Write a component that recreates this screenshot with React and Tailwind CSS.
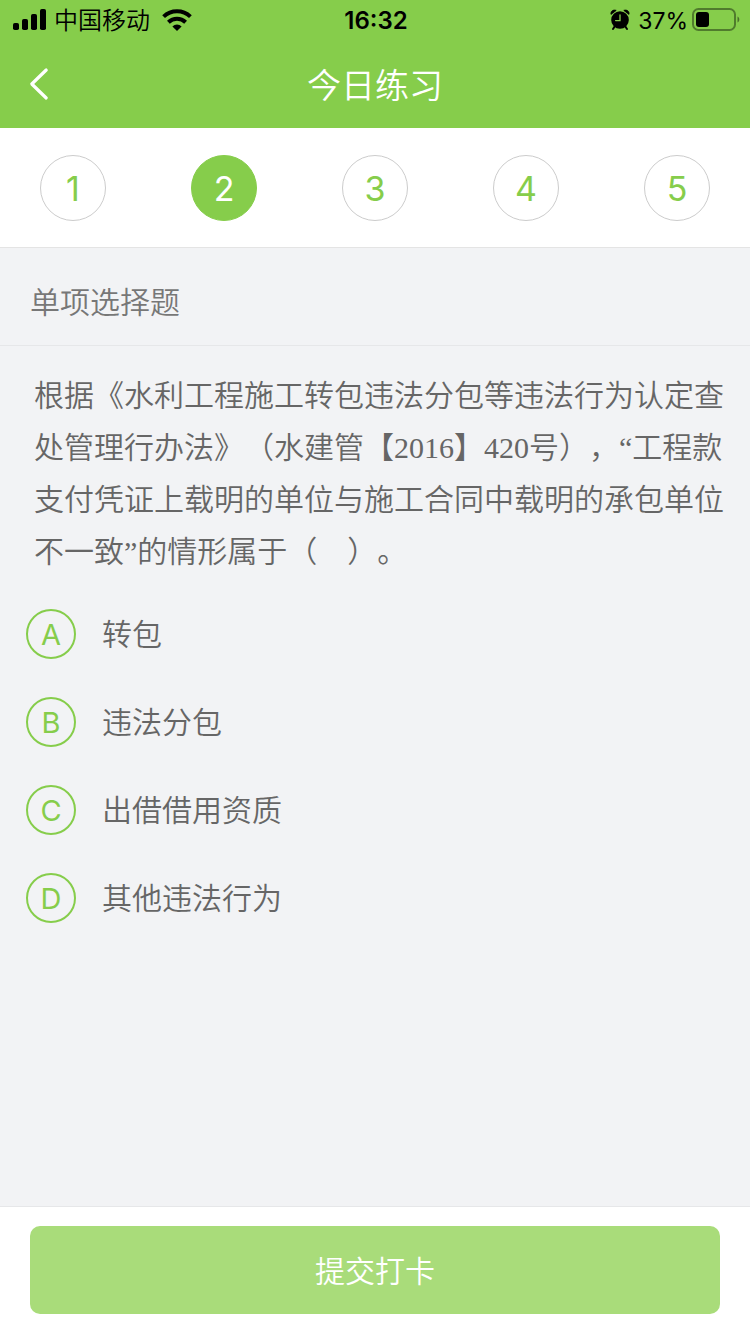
import { useState } from 'react'

const steps = [1, 2, 3, 4, 5]

const options = [
  { key: 'A', text: '转包' },
  { key: 'B', text: '违法分包' },
  { key: 'C', text: '出借借用资质' },
  { key: 'D', text: '其他违法行为' },
]

function SignalIcon() {
  return (
    <svg width="34" height="22" viewBox="0 0 34 22" fill="#000" aria-hidden="true">
      <rect x="1" y="14" width="6" height="7" rx="1.8" />
      <rect x="10" y="10" width="6" height="11" rx="1.8" />
      <rect x="19" y="5" width="6" height="16" rx="1.8" />
      <rect x="28" y="0" width="6" height="21" rx="1.8" />
    </svg>
  )
}

function WifiIcon() {
  return (
    <svg width="30" height="22" viewBox="0 0 30 22" fill="none" stroke="#000" strokeWidth="4" aria-hidden="true">
      <path d="M1.6 7.6a19.4 19.4 0 0 1 26.8 0" />
      <path d="M6.4 13.2a12.4 12.4 0 0 1 17.2 0" />
      <path d="M15 22l-4.6-4.6a6.6 6.6 0 0 1 9.2 0z" fill="#000" stroke="none" />
    </svg>
  )
}

function AlarmIcon() {
  return (
    <svg width="20" height="22" viewBox="0 0 20 22" aria-hidden="true">
      <path d="M5 17l-2 3M15 17l2 3" stroke="#000" strokeWidth="2" strokeLinecap="round" />
      <circle cx="10" cy="11" r="8.8" fill="#000" />
      <path d="M1 5.4C.4 2.6 3 .2 6.2 1.4zM19 5.4C19.6 2.6 17 .2 13.8 1.4z" fill="#000" stroke="#000" strokeWidth="0.8" strokeLinejoin="round" />
      <path d="M10 5.8v5.8H5.6" fill="none" stroke="#86cd4b" strokeWidth="1.3" strokeLinecap="round" />
    </svg>
  )
}

function BatteryIcon() {
  return (
    <svg width="48" height="24" viewBox="0 0 48 24" aria-hidden="true">
      <rect x="1" y="1" width="42" height="21" rx="5.5" fill="none" stroke="#000" strokeOpacity="0.4" strokeWidth="2" />
      <rect x="4" y="4" width="13" height="15" rx="3" fill="#000" />
      <path d="M45.5 8.5c2.4 1 2.4 5 0 6z" fill="#000" fillOpacity="0.45" />
    </svg>
  )
}

function StatusBar() {
  return (
    <div className="flex h-10 items-center px-3 text-2xl text-black">
      <div className="flex flex-1 items-center gap-2">
        <SignalIcon />
        <span className="mr-1 pt-0.5 font-[350] whitespace-nowrap">中国移动</span>
        <WifiIcon />
      </div>
      <div className="pt-0.5 font-semibold">16:32</div>
      <div className="-mr-0.5 flex flex-1 items-center justify-end gap-1">
        <span className="mr-1"><AlarmIcon /></span>
        <span className="pt-0.5 text-[23px]">37%</span>
        <BatteryIcon />
      </div>
    </div>
  )
}

export default function App() {
  const [step, setStep] = useState(2)
  const [answer, setAnswer] = useState('')

  return (
    <div className="flex min-h-screen flex-col bg-[#f2f3f5] font-[Inter,'Noto_Sans_CJK_SC',sans-serif] text-[#666]">
      <header className="bg-[#86cd4b]">
        <StatusBar />
        <div className="grid h-22 grid-cols-[80px_1fr_80px] items-center text-white">
          <button type="button" aria-label="返回" className="flex h-full items-center pl-7">
            <svg width="22" height="34" viewBox="0 0 22 34" fill="none" stroke="currentColor" strokeWidth="3.2" strokeLinecap="round" strokeLinejoin="round">
              <path d="M18.2 3L3.8 17l14.4 14" />
            </svg>
          </button>
          <h1 className="pt-0.5 text-center text-[34px] font-[350]">今日练习</h1>
        </div>
      </header>

      <nav className="flex h-30 items-center justify-between border-b border-[#e4e4e4] bg-white px-10">
        {steps.map((n) => (
          <button
            key={n}
            type="button"
            onClick={() => setStep(n)}
            className={`flex size-[66px] items-center justify-center rounded-full border pt-0.5 text-[34px] ${
              n === step ? 'border-[#86cd4b] bg-[#86cd4b] text-white' : 'border-[#ccc] bg-white text-[#86cd4b]'
            }`}
          >
            {n}
          </button>
        ))}
      </nav>

      <h2 className="flex h-[98px] items-center border-b border-[#e6e7e9] px-[30px] pt-3 text-[30px] font-[350] text-[#777]">
        单项选择题
      </h2>

      <main className="flex-1 pt-6">
        <p className="pr-6 pl-[34px] font-['Liberation_Serif','Noto_Sans_CJK_SC',serif] text-[30px] leading-[52px] font-[350] [text-spacing-trim:space-all]">
          根据《水利工程施工转包违法分包等违法行为认定查处管理行办法》（水建管【2016】420号），“工程款支付凭证上载明的单位与施工合同中载明的承包单位不一致”的情形属于（&nbsp;&nbsp;&nbsp;&nbsp;）。
        </p>
        <div className="mt-3 pb-6" role="radiogroup" aria-label="单项选择题">
          {options.map((o) => (
            <label key={o.key} className="flex h-22 cursor-pointer items-center gap-[26px] px-[26px]">
              <input
                type="radio"
                name="answer"
                value={o.key}
                checked={answer === o.key}
                onChange={() => setAnswer(o.key)}
                className="peer sr-only"
              />
              <span className="flex size-[50px] shrink-0 items-center justify-center rounded-full border-2 border-[#86cd4b] pt-0.5 text-[29px] text-[#86cd4b] peer-checked:bg-[#86cd4b] peer-checked:text-white">
                {o.key}
              </span>
              <span className="text-[30px] font-[350]">{o.text}</span>
            </label>
          ))}
        </div>
      </main>

      <footer className="border-t border-[#e6e7e9] bg-white px-[30px] pt-[19px] pb-5">
        <button type="button" className="h-22 w-full rounded-[10px] bg-[#a9dc7a] pt-0.5 text-[30px] font-[350] text-white">
          提交打卡
        </button>
      </footer>
    </div>
  )
}
